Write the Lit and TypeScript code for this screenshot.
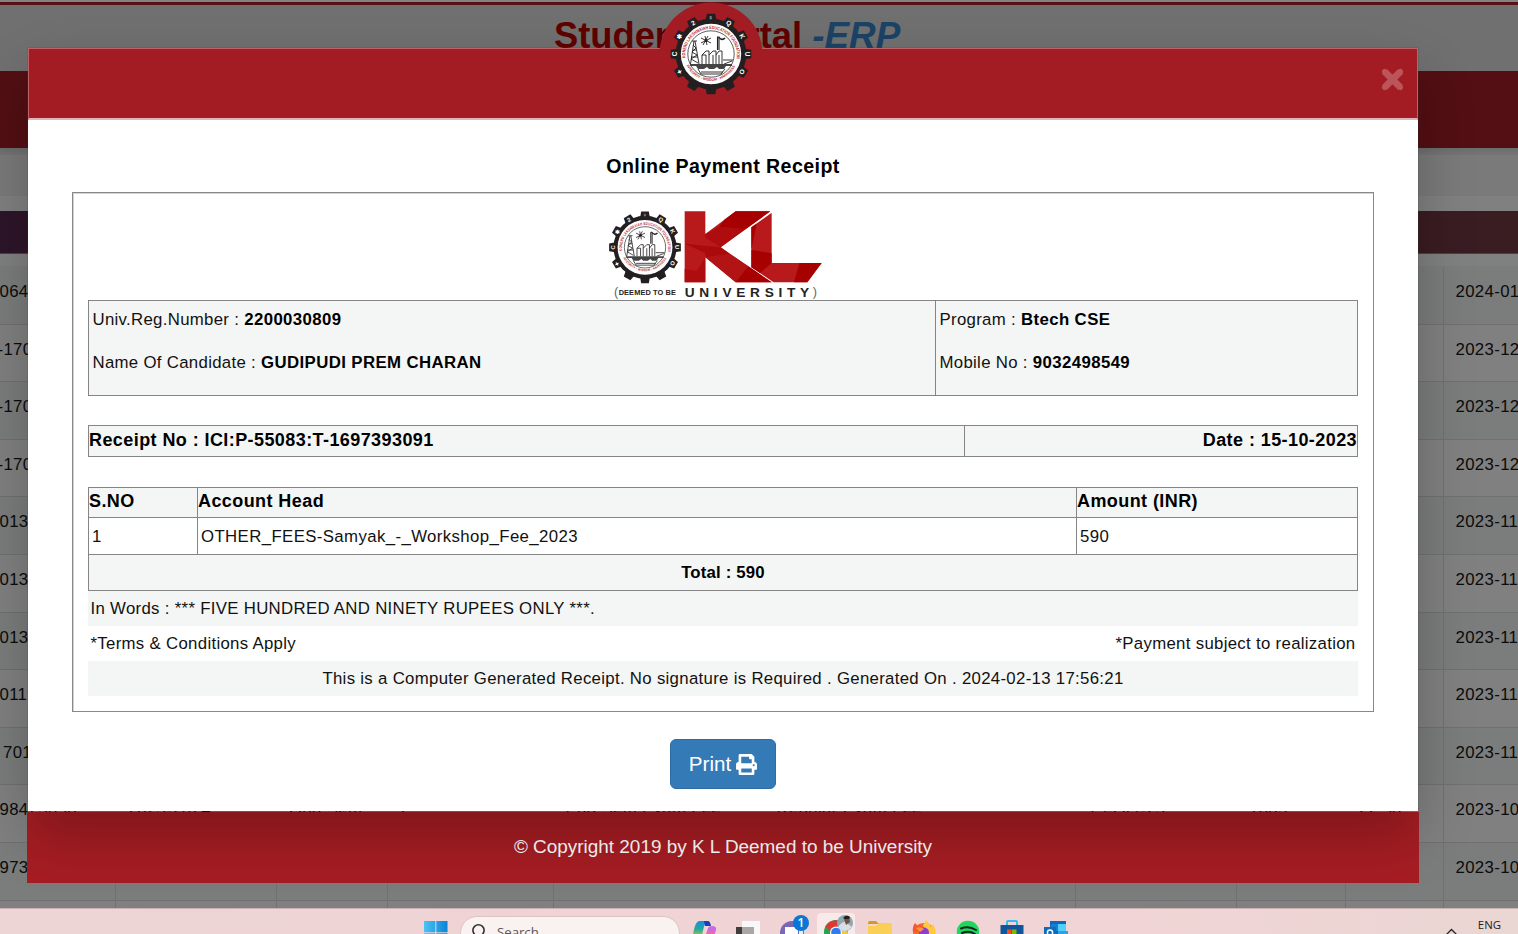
import { LitElement, html, css, svg } from "lit";
import { customElement } from "lit/decorators.js";

const teeth = Array.from({ length: 12 }, (_, i) => i * 30);
const toothMarks: [number, string][] = [
  [0, "♀"], [30, "Q"], [60, "K"], [90, "U"], [120, "O"], [240, "✦"], [270, "C"], [300, "✱"], [330, "2"],
];

/* Gear emblem centred on 0,0 with an outer radius of 40. */
const emblem = (id: string, disc: number) => svg`
  <defs>
    <path id="${id}t" d="M-25.6 4 A25.8 25.8 0 1 1 25.6 4"></path>
    <path id="${id}b" d="M-24.5 11.5 A27.2 27.2 0 0 0 24.5 11.5"></path>
  </defs>
  ${teeth.map((a) => svg`<path d="M-5.6 -33 L-4.3 -40.3 H4.3 L5.6 -33Z" fill="#231f20" transform="rotate(${a})"></path>`)}
  <circle r="35.4" fill="#231f20"></circle>
  <circle r="${disc}" fill="#fff"></circle>
  ${toothMarks.map(([a, g]) => svg`<text transform="rotate(${a}) translate(0 -33.6)" text-anchor="middle" font-size="6.5" font-weight="700" fill="#fff">${g}</text>`)}
  <text font-size="4.6" font-weight="700" fill="#b3262c"><textPath href="#${id}t" textLength="88" lengthAdjust="spacingAndGlyphs">KONERU LAKSHMAIAH EDUCATION FOUNDATION</textPath></text>
  <text font-size="3.6" font-weight="700" fill="#b3262c"><textPath href="#${id}b" textLength="60" lengthAdjust="spacingAndGlyphs">INTEGRITY - WISDOM - HAPPINESS</textPath></text>
  <circle r="23.2" fill="#fff" stroke="#333" stroke-width=".8"></circle>
  <g fill="none" stroke="#231f20" stroke-width=".9">
    <path d="M-17 -13 L-20.5 10 M-16 -13 L-12 10 M-18 -9 L-15 -6 L-19 -2 L-14 1 L-20 5 L-13 9 M-18 -4 H-14.5 M-20 3 H-13 M-19 -13 H-14"></path>
    <path d="M-6 -18 L-4 -9 M-10 -16 L0 -11 M-10 -11 L0 -16 M-3 -18 L-8 -9"></path>
    <path d="M-9 10 V1 L-5 -3 H-2 V10 M-2 1 L2 -3 H5 V10 M2 10 V1 M5 1 L8 -3 H11 V10 M8 10 V1 M-9 1 H-5 V10"></path>
    <path d="M6.500 -4 V-17 H8 V-4" stroke-width="1.1"></path><path d="M8 -16.500 Q11 -13 14 -16" stroke-width="1.6"></path>
    <path d="M-13 15 L-10 20 H10 L14 15 M-10 18 H12 M12 6 H22 M13 10 L21 7"></path>
  </g>
  <path d="M-21 10 H21 V12 H15 L13 15 H8 L6 13 L3 15 H-2 L-4 13 L-7 15 H-13 L-15 12 H-21Z" fill="#444"></path>
  <circle cx="-5" cy="-13.500" r="1.500" fill="#231f20"></circle>`;

@customElement("kl-logo")
class KlLogo extends LitElement {
  static styles = css`
    :host { display: block; height: 110px; width: 260px; }
    svg { display: block; font-family: "Liberation Sans", Arial, sans-serif; overflow: visible; }
  `;
  render() {
    return html`<svg width="260" height="110" viewBox="0 0 780 330">
      <g transform="translate(165 157) scale(2.67)">${emblem("k", 30.8)}</g>
      <path d="M284 49H346V117L437 49H541L392 157L545 262H437L346 187V262H284Z" fill="#b81a1c"></path>
      <path d="M437 49H541L466 103L387 95L405 73Z" fill="#a60000"></path>
      <path d="M387 95L466 103L392 157L346 128V117Z" fill="#ae0c0e"></path>
      <path d="M284 146L392 157L420 177L346 187V174Z" fill="#ab0a0c"></path>
      <path d="M284 262V222L320 228L346 187V262Z" fill="#ae0c0e"></path>
      <path d="M346 187L420 177L475 214L437 262Z" fill="#b21416"></path>
      <path d="M437 262L475 214L545 262Z" fill="#a60000"></path>
      <path d="M484 97L545 53V204H695L652 262H551L484 217Z" fill="#b81a1c"></path>
      <path d="M484 165L545 175V204L510 234L484 217Z" fill="#a60000"></path>
      <path d="M484 97L500 86L484 165Z" fill="#a60000"></path>
      <path d="M628 204H695L652 262H612Z" fill="#a60000"></path>
      <g fill="#262223" font-weight="700">
        <text x="72" y="304" font-size="38" font-weight="400" fill="#666">(</text>
        <text x="86" y="299" font-size="21" textLength="172" lengthAdjust="spacingAndGlyphs">DEEMED TO BE</text>
        <text x="284" y="306" font-size="41" textLength="374" lengthAdjust="spacing">UNIVERSITY</text>
        <text x="668" y="304" font-size="38" font-weight="400" fill="#666">)</text>
      </g>
    </svg>`;
  }
}

interface Row { id: string; cls: string; date: string; cells?: string[] }

const rows: Row[] = [
  { id: "064", cls: "", date: "2024-01-08" },
  { id: "-170", cls: "dash", date: "2023-12-19" },
  { id: "-170", cls: "dash", date: "2023-12-18" },
  { id: "-170", cls: "dash", date: "2023-12-15" },
  { id: "013", cls: "", date: "2023-11-29" },
  { id: "013", cls: "", date: "2023-11-27" },
  { id: "013", cls: "", date: "2023-11-24" },
  { id: "0119", cls: "", date: "2023-11-20" },
  { id: "701", cls: "inset", date: "2023-11-18" },
  { id: "98423050", cls: "", date: "2023-10-15",
    cells: ["2023-2024", "Odd Sem", "2", "End Sem Exam Fee", "Regular Exam Fee", "15-Oct-23", "1003", "22:50"] },
  { id: "973", cls: "", date: "2023-10-12" },
  { id: "", cls: "", date: "" },
];

@customElement("portal-backdrop")
class PortalBackdrop extends LitElement {
  static styles = css`
    :host { display: block; width: 1518px; height: 908px; overflow: hidden; background: #808080; }
    .top { box-sizing: border-box; height: 71px; background: #707070; border-top: 2px solid #838383; }
    .line { height: 3px; background: #5b1017; }
    .title { margin: 0; padding: 10px 0 0 554px; font: 700 36.3px/42px "Liberation Sans", Arial, sans-serif; color: #600000; white-space: nowrap; }
    .erp { color: #1b4365; font-style: italic; font-size: 36.9px; }
    .nav { height: 77px; background: #530f13; }
    .edge { height: 7px; background: linear-gradient(#6c6c6c, #757575); }
    .crumbs { height: 41px; background: #7a7a7a; }
    .bar { height: 42px; margin-top: 15px; border-bottom: 1px solid #5b3a40; background: linear-gradient(90deg, #2d1529, #3a1d21); margin-bottom: 12px; }
    .row { display: grid; grid-template-columns: 115.5px 161.5px 110.5px 166px 211px 311px 161.5px 109px 97.5px 75px;
      height: 57.6px; box-sizing: border-box; border-top: 1px solid #707070; background: #808080; }
    .row:nth-child(odd) { background: #7a7d7c; }
    .row:first-child { border-top-color: #7a7d7c; }
    .cell { border-right: 1px solid #717171; padding-left: 12px; font: 16.8px/20px "Liberation Sans", Arial, sans-serif; letter-spacing: .35px; color: #0b0b0b; padding-top: 15px; white-space: nowrap; overflow: hidden; }
    .id { padding-left: 0; text-indent: -.5px; }
    .dash { text-indent: -2.5px; }
    .inset { text-indent: 3px; }
    .date { border-right: 0; }
  `;
  render() {
    return html`
      <div class="top"><div class="line"></div>
        <h1 class="title">Student Portal <span class="erp">-ERP</span></h1></div>
      <div class="nav"></div><div class="edge"></div><div class="crumbs"></div><div class="bar"></div>
      <div>${rows.map((r) => html`<div class="row">
        <div class="cell id ${r.cls}">${r.id}</div>
        ${Array.from({ length: 8 }, (_, i) => html`<div class="cell">${r.cells ? r.cells[i] : ""}</div>`)}
        <div class="cell date">${r.date}</div></div>`)}</div>`;
  }
}

@customElement("payment-receipt")
class PaymentReceipt extends LitElement {
  static styles = css`
    :host { display: block; box-sizing: border-box; width: 1302px; height: 520px; border: 1px solid #888;
      box-shadow: inset 1px 0 #d4d4d4, inset 0 1px #d4d4d4; padding: 2px 15px 0;
      font: 16.8px/20px "Liberation Sans", Arial, sans-serif; letter-spacing: .31px; color: #111; white-space: nowrap; }
    b { color: #000; letter-spacing: .4px; }
    .logo { height: 105px; padding-left: 502px; }
    .grid { display: grid; border: 1px solid #858585; background: #f4f6f5; box-sizing: border-box; }
    .grid > * + * { border-left: 1px solid #858585; }
    .who { grid-template-columns: 846px 1fr; height: 96px; }
    .who > div { display: flex; flex-direction: column; gap: 23px; padding: 9px 3.5px; }
    .big { font-weight: 700; font-size: 18px; letter-spacing: .42px; color: #000; }
    .number { grid-template-columns: 875px 1fr; height: 32px; margin-top: 29px; line-height: 29px; }
    .right { text-align: right; }
    .head { grid-template-columns: 108px 879px 1fr; height: 31px; margin-top: 30px; line-height: 27px; }
    .item { grid-template-columns: 108px 879px 1fr; height: 37px; border-top: 0; background: #fff; line-height: 37px; letter-spacing: .39px; }
    .item > div { padding-left: 3px; }
    .total { height: 36px; border-top: 0; text-align: center; line-height: 36px; font-weight: 700; color: #000; letter-spacing: .18px; }
    .note { height: 35px; line-height: 35px; padding: 0 2.5px; display: flex; justify-content: space-between; }
    .shade { background: #f4f6f5; }
    .mid { justify-content: center; }
  `;
  render() {
    return html`
      <div class="logo"><kl-logo></kl-logo></div>
      <div class="grid who">
        <div><span>Univ.Reg.Number : <b>2200030809</b></span><span>Name Of Candidate : <b>GUDIPUDI PREM CHARAN</b></span></div>
        <div><span>Program : <b>Btech CSE</b></span><span>Mobile No : <b>9032498549</b></span></div>
      </div>
      <div class="grid number big"><div>Receipt No : ICI:P-55083:T-1697393091</div><div class="right">Date : 15-10-2023</div></div>
      <div class="grid head big"><div>S.NO</div><div>Account Head</div><div>Amount (INR)</div></div>
      <div class="grid item"><div>1</div><div>OTHER_FEES-Samyak_-_Workshop_Fee_2023</div><div>590</div></div>
      <div class="grid total">Total : 590</div>
      <div class="note shade">In Words : *** FIVE HUNDRED AND NINETY RUPEES ONLY ***.</div>
      <div class="note"><span>*Terms &amp; Conditions Apply</span><span>*Payment subject to realization</span></div>
      <div class="note shade mid">This is a Computer Generated Receipt. No signature is Required . Generated On . 2024-02-13 17:56:21</div>`;
  }
}

@customElement("task-bar")
class TaskBar extends LitElement {
  static styles = css`
    :host { display: flex; box-sizing: border-box; width: 1518px; height: 26px; overflow: hidden; border-top: 1px solid #c9b3b3;
      background: linear-gradient(90deg, #ecd5d4, #f0d3d4 40%, #f1d5d6 75%, #ead6d3); font-family: "Open Sans", "Noto Sans", sans-serif; }
    svg { display: block; flex: none; width: 24px; height: 25px; overflow: visible; }
    .start { margin-left: 424px; }
    .search { display: flex; box-sizing: border-box; flex: none; margin: 7px 12px 0 12px; width: 220px; height: 34px; border: 1px solid #ddc4c4; border-radius: 17px; background: #faf2f1;
      font-size: 13.2px; line-height: 18px; color: #5c5555; padding: 6px 0 0 10px; gap: 10px; }
    .search svg { width: 16px; height: 16px; margin-top: 1px; }
    .apps { display: flex; gap: 20px; flex: none; }
    .badge { font-size: 12px; font-weight: 600; }
    .tray { display: flex; flex: 1; justify-content: flex-end; padding-right: 17px; gap: 21px; font-size: 11.4px; line-height: 14px; color: #222; }
    .lang { padding-top: 9px; }
    .tray svg { width: 11px; }
  `;
  render() {
    return html`
      <svg class="start" viewBox="0 0 24 25"><defs><linearGradient id="w" x2="1"><stop stop-color="#4cc2f5"></stop><stop offset="1" stop-color="#0a84d8"></stop></linearGradient></defs>
        <path d="M0 12H11.300V23.300H0ZM12.300 12H23.500V23.300H12.300ZM0 24.300H11.300V30H0ZM12.300 24.300H23.500V30H12.300Z" fill="url(#w)"></path></svg>
      <div class="search"><svg viewBox="0 0 16 16" fill="none" stroke="#333" stroke-width="1.6"><circle cx="7.500" cy="6.300" r="5.600"></circle><path d="M11.500 10.500L15 14"></path></svg><span>Search</span></div>
      <div class="apps">
        <svg viewBox="0 0 24 25"><defs><linearGradient id="cp" y2="1" x2="0"><stop stop-color="#168fdc"></stop><stop offset=".45" stop-color="#25a99d"></stop><stop offset="1" stop-color="#e8cf2b"></stop></linearGradient></defs>
          <path d="M0 30C2 21 3 12 8 12H16C12 12 11 24 9 30Z" fill="url(#cp)"></path><path d="M12 12H16Q18 12 19 17H13Z" fill="#173fc0"></path><path d="M13 30L16 19Q17 17 20 17Q25 17 24 21L21 30Z" fill="#c86be0"></path><path d="M13 30L15 22H23L21 30Z" fill="#f06aa0"></path></svg>
        <svg viewBox="0 0 24 25"><path d="M6 12H24V30H6Z" fill="#f8f8f8"></path><path d="M0 18H18V30H0Z" fill="#403d3d"></path><path d="M6 18H18V30H6Z" fill="#aaa6a6"></path></svg>
        <svg viewBox="0 0 24 25"><circle cx="12" cy="24" r="12" fill="#7b68b4"></circle><path d="M5 18H18V30H5Z" fill="#fff"></path><path d="M19 21L23 19V30H19Z" fill="#eee"></path><circle cx="21" cy="14" r="8" fill="#0878d4"></circle><text class="badge" x="21" y="18.300" text-anchor="middle" fill="#fff">1</text></svg>
        <svg viewBox="0 0 24 25"><rect x="-7" y="4" width="38" height="34" rx="4" fill="#f8eae9"></rect><circle cx="12" cy="23" r="12" fill="#2e9f50"></circle><path d="M1.500 17.500A12 12 0 0 1 22.500 17.500L17 23H8Z" fill="#dc3a31"></path><path d="M17 17H23L24 25H17Z" fill="#f7c72d"></path><circle cx="12" cy="23.500" r="6" fill="#fff"></circle><circle cx="12" cy="23.500" r="4.800" fill="#2f7cee"></circle>
          <circle cx="21" cy="14" r="8" fill="#8ea7b5"></circle><path d="M14 18Q20 10 24 15L28 18Q24 22 20 22Q16 21 14 18Z" fill="#d8dde7"></path><path d="M20 10Q21 6 25 8L26 13L22 16Z" fill="#77513f"></path><path d="M19 9Q22 5 26 8L25 10H21Z" fill="#252020"></path></svg>
        <svg viewBox="0 0 24 25"><path d="M0 14Q0 12 2 12H8L11 15H0Z" fill="#d59a1a"></path><path d="M0 17H8L11 14H22Q24 14 24 16V30H0Z" fill="#f9cf55"></path></svg>
        <svg viewBox="0 0 24 25"><circle cx="12" cy="25" r="11" fill="#f26b2d"></circle><path d="M1 23Q0 18 3 14L6 17L9 16L8 23Z" fill="#f6572d"></path><path d="M11 16Q13 14 14 11Q18 15 19 18L21 15Q25 22 23 29H16Z" fill="#ffc93b"></path><circle cx="12" cy="23.500" r="5" fill="#8b3fd0"></circle><path d="M4 19Q9 17 12 20L8 23Z" fill="#ff9438"></path></svg>
        <svg viewBox="0 0 24 25"><circle cx="12" cy="23" r="11.200" fill="#1ed760"></circle><path d="M5 19.500Q13 16.500 20 21M6 24Q13 21 19 25" stroke="#14251a" stroke-width="2" fill="none" stroke-linecap="round"></path></svg>
        <svg viewBox="0 0 24 25"><path d="M7 16V13Q7 12 8 12H16Q17 12 17 13V16" fill="none" stroke="#35b9ef" stroke-width="2"></path><path d="M0.500 16H23.500V30H.5Z" fill="#11559c"></path><path d="M7 20.500H11.500V25H7Z" fill="#f25022"></path><path d="M12 20.500H16.500V25H12Z" fill="#7fba00"></path></svg>
        <svg viewBox="0 0 24 25"><path d="M6 12H22V30H6Z" fill="#1268b8"></path><path d="M14 15H22V22H14Z" fill="#4fd0fa"></path><path d="M7 15H14V22H7Z" fill="#1480d2"></path><path d="M14 22H24V30H14Z" fill="#2aa3e8"></path><path d="M0 18H12V30H0Z" fill="#0f6cbd"></path><circle cx="6" cy="23.500" r="2.600" fill="none" stroke="#fff" stroke-width="1.500"></circle></svg>
      </div>
      <div class="tray"><svg viewBox="0 0 11 25"><path d="M.5 25.500L5.500 20.500L10.500 25.500" fill="none" stroke="#222" stroke-width="1.300"></path></svg><span class="lang">ENG</span></div>`;
  }
}

@customElement("app-root")
class AppRoot extends LitElement {
  static styles = css`
    :host { display: block; position: relative; width: 1518px; height: 934px; overflow: hidden; font-family: "Liberation Sans", Arial, sans-serif; }
    .overlay { position: absolute; inset: 0 0 26px 0; overflow: hidden; padding: 48px 0 0 28px; }
    .modal { position: relative; z-index: 1; box-sizing: border-box; width: 1390px; height: 763px; background: #fff;
      box-shadow: 0 0 1px #444, 0 26px 52px rgba(0,0,0,.23); }
    .head { display: flex; justify-content: flex-end; align-items: flex-start; box-sizing: border-box; height: 72px; background: #a41c23;
      border: 1px solid #bf6267; border-bottom: 2px solid #dfb4b7; padding: 19px 13px 0 0; }
    .crest { position: absolute; left: 631px; top: -46px; }
    .crest svg { display: block; overflow: visible; }
    .close { width: 23px; height: 23px; }
    .heading { margin: 0; padding: 34px 0 14px; text-align: center; font: 700 19.6px/24px "Liberation Sans", Arial, sans-serif; letter-spacing: .42px; color: #000; }
    .body { padding-left: 44px; }
    .actions { display: flex; justify-content: center; padding-top: 27px; }
    .print { display: flex; align-items: center; justify-content: center; gap: 5px; box-sizing: border-box; width: 106px; height: 50px; border: 1px solid #2e6da4; border-radius: 6px;
      background: #337ab7; color: #fff; font: 20.6px/24px "Liberation Sans", Arial, sans-serif; padding: 0; }
    .footer { box-sizing: border-box; width: 1392px; height: 71px; margin: 1px 0 0 -1px; background: #a61d23; color: #fff; text-align: center;
      font-size: 18.93px; line-height: 69px; }
  `;
  render() {
    return html`
      <portal-backdrop></portal-backdrop>
      <task-bar></task-bar>
      <div class="overlay">
        <section class="modal">
          <header class="head">
            <div class="crest"><svg width="104" height="104" viewBox="-52 -52 104 104" font-family="Liberation Sans, Arial, sans-serif"><circle r="51.500" fill="#a41c23"></circle>${emblem("h", 30.2)}</svg></div>
            <svg class="close" viewBox="0 0 23 23" fill="none" stroke="#bd545a"><path d="M3.400 3.400L19.600 19.600M19.600 3.400L3.400 19.600" stroke-width="7"></path><path d="M3.500 3.500L19.500 19.500M19.500 3.500L3.500 19.500" stroke-width="5" stroke-linecap="round"></path></svg>
          </header>
          <h2 class="heading">Online Payment Receipt</h2>
          <div class="body"><payment-receipt></payment-receipt></div>
          <div class="actions"><button class="print">Print
            <svg width="21" height="21" viewBox="0 0 512 512" fill="#fff"><path d="M448 192V77.250c0-8.490-3.370-16.620-9.370-22.630L393.370 9.370c-6-6-14.140-9.370-22.630-9.370H96C78.330 0 64 14.330 64 32v160c-35.350 0-64 28.650-64 64v112c0 8.840 7.160 16 16 16h48v96c0 17.670 14.330 32 32 32h320c17.670 0 32-14.330 32-32v-96h48c8.840 0 16-7.160 16-16V256c0-35.350-28.650-64-64-64zm-64 256H128v-96h256v96zm0-224H128V64h192v48c0 8.840 7.160 16 16 16h48v96zm48 72c-13.250 0-24-10.750-24-24 0-13.260 10.750-24 24-24s24 10.740 24 24c0 13.250-10.750 24-24 24z"></path></svg></button></div>
        </section>
        <footer class="footer">© Copyright 2019 by K L Deemed to be University</footer>
      </div>`;
  }
}
